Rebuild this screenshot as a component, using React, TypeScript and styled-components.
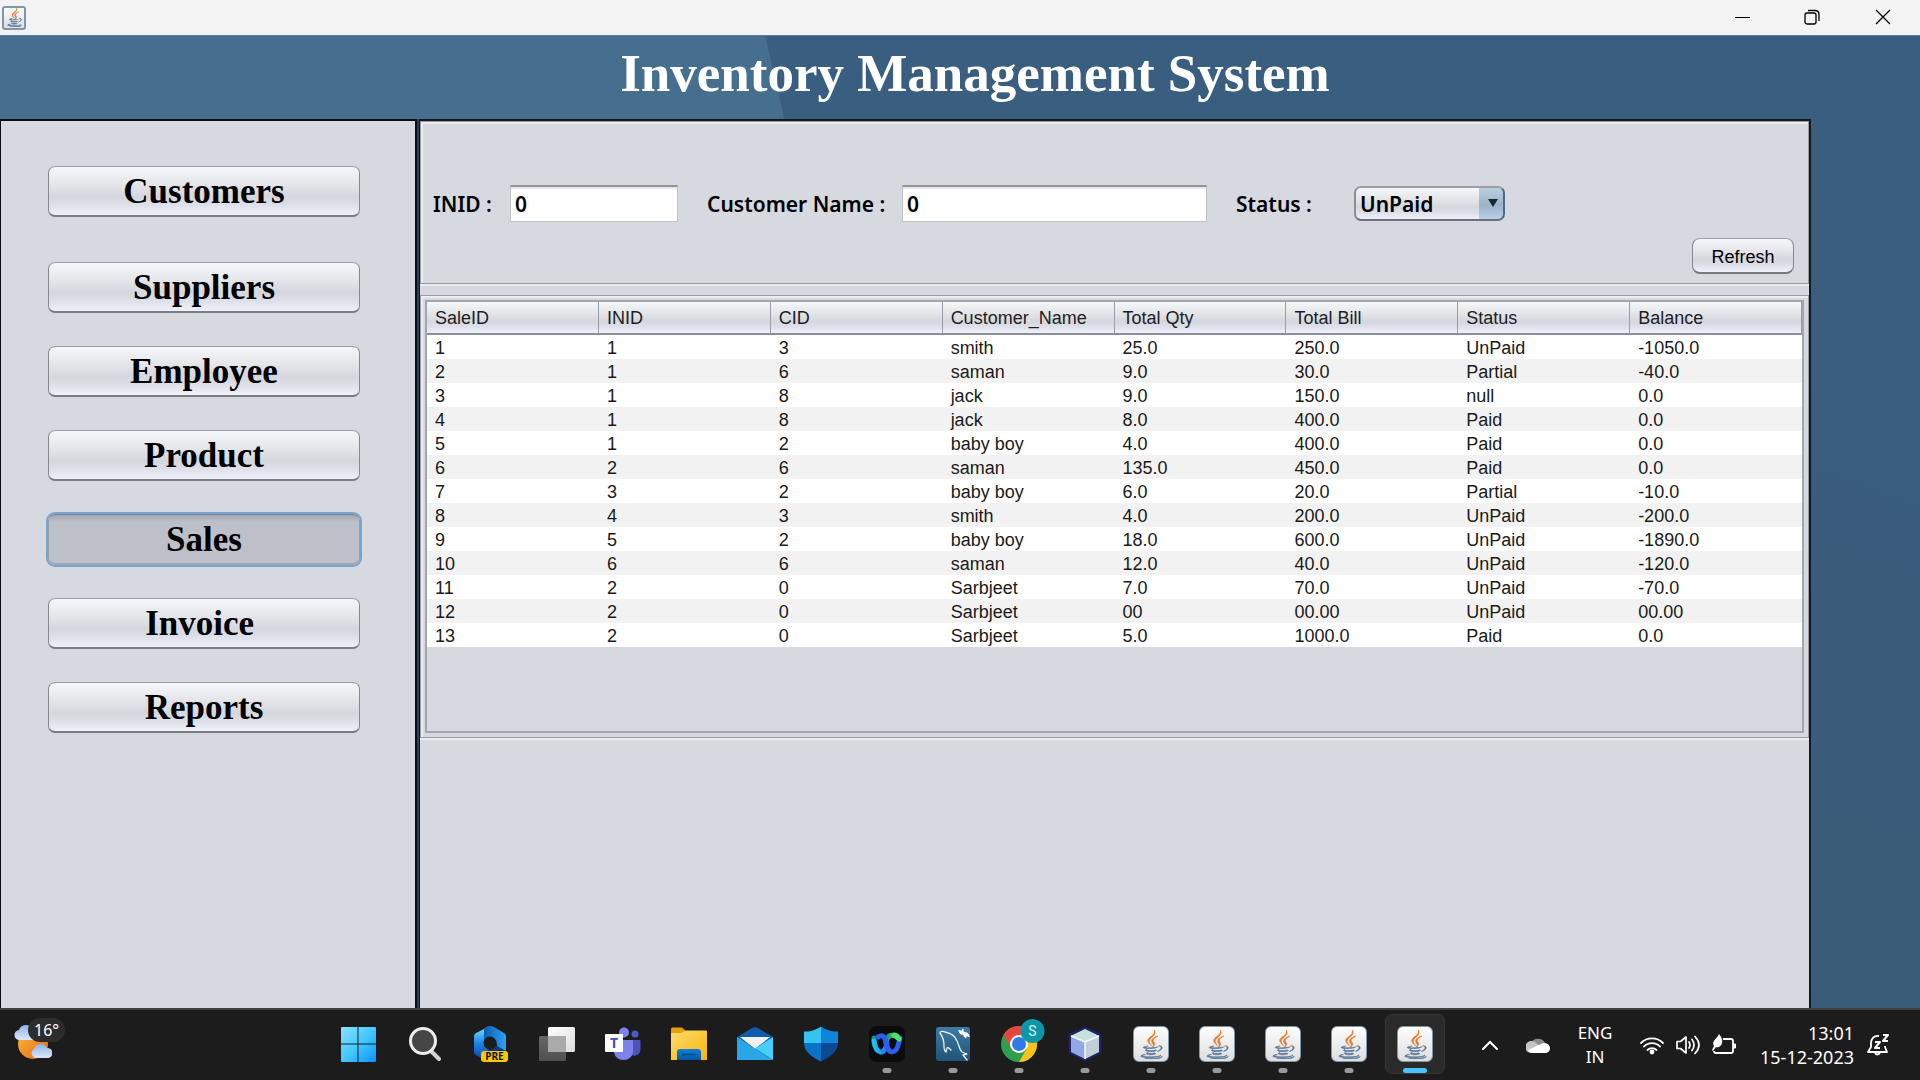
import React, { useState } from "react";
import styled, { createGlobalStyle, css } from "styled-components";
import { FaJava } from "react-icons/fa";

const sans = '"Liberation Sans", Arial, sans-serif';
const serif = '"Liberation Serif", "Times New Roman", serif';
const humanist = '"Noto Sans", "Open Sans", sans-serif';

const panel = "#d6d9e0";
const metal = "linear-gradient(#f6f7f9 0%, #e4e6ea 35%, #d5d7de 62%, #dcdfe8 78%, #eff1fa 100%)";

const GlobalStyle = createGlobalStyle`
  *, *::before, *::after { box-sizing: border-box; }
  body { margin: 0; background: #1c1c1c; }
  button, input, select { margin: 0; font: inherit; color: inherit; }
`;

const Screen = styled.div`
  min-height: 100vh;
  display: flex;
  flex-direction: column;
  font-family: ${sans};
  color: #000;
`;

/* ---------- window frame ---------- */

const TitleBar = styled.div`
  height: 35px;
  padding: 0 2px;
  display: flex;
  align-items: center;
  justify-content: space-between;
  background: #f3f3f3;
`;

const WindowControls = styled.div`
  align-self: flex-start;
  display: flex;
`;

const WindowButton = styled.button`
  width: 70px;
  height: 33px;
  padding: 0;
  border: 0;
  display: grid;
  place-items: center;
  background: transparent;
`;

const Banner = styled.header`
  height: 84px;
  padding: 7px 0 0 30px;
  border-top: 1px solid #5b7d98;
  text-align: center;
  background: linear-gradient(77deg, #466e8f calc(50% - 181px), #3a5e80 calc(50% - 180px));
`;

const Heading = styled.h1`
  margin: 0;
  font: bold 53px/60px ${serif};
  color: #fff;
`;

const Workspace = styled.div`
  flex: 1;
  padding-right: 109px;
  display: flex;
  background: linear-gradient(200deg, #3a5e80 0%, #3a5d7a 50%, #385b76 75%);
`;

const Divider = styled.div`
  width: 2px;
  background: #23415a;
`;

const Sidebar = styled.nav`
  width: 417px;
  padding: 45px 55px 0 47px;
  border: solid #0c0f12;
  border-width: 2px 2px 0 1px;
  display: flex;
  flex-direction: column;
  gap: 33px;
  background: ${panel};
`;

const NavButton = styled.button<{ $active?: boolean; $spaced?: boolean }>`
  height: 51px;
  padding: 2px 0 0;
  margin-bottom: ${(p) => (p.$spaced ? "12px" : "0")};
  border: 1px solid;
  border-width: 1px 1px 2px;
  border-color: #9a9da2 #85888e #7a7d83 #85888e;
  border-radius: 7px;
  font: bold 35px/46px ${serif};
  white-space: pre;
  background: ${metal};
  ${(p) =>
    p.$active &&
    css`
      border-color: #7d8189 #9a9ea6 #a4a8ae #9a9ea6;
      background: linear-gradient(#a3a6ae, #bdc0c8 14%, #bdc0c8);
      box-shadow: 0 0 0 2px #74a5d4;
    `}
`;

const Main = styled.main`
  flex: 1;
  min-width: 0;
  border: solid #15181c;
  border-width: 2px 2px 0 1px;
  display: flex;
  flex-direction: column;
  gap: 11px;
  background: ${panel};
`;

const Etched = styled.section`
  border: 1px solid #999ba0;
  box-shadow: inset 2px 2px 0 #ebecef, 0 2px 0 #ebecef;
`;

const FilterPanel = styled(Etched)`
  padding: 63px 14px 9px 12px;
  display: flex;
  flex-direction: column;
  gap: 16px;
`;

const TablePanel = styled(Etched)`
  padding: 4px;
`;

/* ---------- filter form ---------- */

const FieldRow = styled.div`
  display: flex;
  align-items: center;
  gap: 29px;
  font: 600 21px/26px ${humanist};
`;

const Field = styled.div`
  display: flex;
  align-items: center;
`;

const Label = styled.label<{ $width: number }>`
  width: ${(p) => p.$width}px;
  white-space: nowrap;
`;

const TextInput = styled.input<{ $width: number }>`
  width: ${(p) => p.$width}px;
  height: 37px;
  padding: 0 4px;
  border: 1px solid #bfc1c6;
  border-top: 2px solid #919398;
  border-radius: 0;
  outline: 0;
  background: linear-gradient(#dcdcde, #fff 3px);
`;

const SelectWrap = styled.div`
  position: relative;
  width: 151px;
  height: 35px;
`;

const Select = styled.select`
  width: 100%;
  height: 100%;
  padding: 0 26px 0 4px;
  border: 2px solid;
  border-color: #9b9da3 #4f6a86 #6d7078 #8b8e93;
  border-radius: 7px;
  appearance: none;
  outline: 0;
  line-height: 30px;
  background: linear-gradient(#bccfdf, #9ab3ca 55%, #b9d2e8) right / 24px 100% no-repeat, ${metal};
`;

const SelectArrow = styled.svg`
  position: absolute;
  right: 7px;
  top: 13px;
  pointer-events: none;
`;

const RefreshButton = styled.button`
  align-self: flex-end;
  width: 102px;
  height: 36px;
  padding: 2px 0 0;
  border: 1px solid;
  border-width: 1px 1px 2px;
  border-color: #9c9fa3 #85888e #75787e #85888e;
  border-radius: 8px;
  font: 18px/30px ${sans};
  background: ${metal};
`;

/* ---------- sales table ---------- */

const TableScroll = styled.div`
  min-height: 433px;
  border: 2px solid #a2a5af;
`;

const Table = styled.table`
  width: 100%;
  table-layout: fixed;
  border-collapse: separate;
  border-spacing: 0;
  font-size: 18px;
  text-align: left;
`;

const HeadCell = styled.th`
  height: 33px;
  padding: 0 8px;
  border-right: 1px solid #9a9da7;
  border-bottom: 2px solid #8b8e98;
  font-weight: normal;
  line-height: 24px;
  color: #1d1d1f;
  background: ${metal};
`;

const Row = styled.tr`
  background: #fff;
  &:nth-child(even) { background: #f2f2f2; }
`;

const Cell = styled.td`
  height: 24px;
  padding: 2px 8px 0;
  line-height: 22px;
  color: #1a1a1a;
`;

/* ---------- taskbar ---------- */

const Taskbar = styled.footer`
  height: 72px;
  border-top: 2px solid #404040;
  display: flex;
  color: #fff;
  background: #1c1c1c;
  font: 17px/24px ${humanist};
`;

const Weather = styled.div`
  position: relative;
  width: 326px;
  padding: 15px 0 0 14px;
`;

const Temperature = styled.span`
  position: absolute;
  left: 28px;
  top: 8px;
  padding: 0 6px;
  border-radius: 12px;
  font-size: 16px;
  background: #2d2d2d;
`;

const AppStrip = styled.div`
  display: flex;
`;

const AppButton = styled.button<{ $state?: "open" | "active" }>`
  position: relative;
  width: 60px;
  height: 60px;
  margin: 4px 3px 0;
  padding: 0;
  border: 1px solid transparent;
  border-radius: 7px;
  display: grid;
  place-items: center;
  background: transparent;
  ${(p) => p.$state === "active" && css`border-color: #363636; background: #2a2a2a;`}
  ${(p) =>
    p.$state &&
    css`
      &::after {
        content: "";
        position: absolute;
        left: 50%;
        bottom: 0;
        width: ${p.$state === "active" ? 24 : 9}px;
        height: 5px;
        border-radius: 3px;
        transform: translateX(-50%);
        background: ${p.$state === "active" ? "#4cc2ff" : "#9a9a9a"};
      }
    `}
`;

const Tray = styled.div`
  margin-left: auto;
  padding-right: 24px;
  display: flex;
  align-items: center;
`;

const TrayButton = styled.button`
  width: 36px;
  height: 48px;
  padding: 0;
  border: 0;
  display: grid;
  place-items: center;
  background: transparent;
`;

const TrayWide = styled(TrayButton)`
  width: 48px;
`;

const Language = styled.div`
  width: 66px;
  margin-right: 6px;
  text-align: center;
`;

const Clock = styled.time`
  margin: 0 6px 0 18px;
  font-size: 18px;
  text-align: right;
`;

/* ---------- icons ---------- */

const JavaTile = styled.span<{ $size: number }>`
  width: ${(p) => p.$size}px;
  height: ${(p) => p.$size}px;
  border: ${(p) => (p.$size > 30 ? 1 : 2)}px solid #7f97ab;
  border-radius: ${(p) => (p.$size > 30 ? 6 : 3)}px;
  display: grid;
  place-items: center;
  background: linear-gradient(#fdfdfd, #dedede);
  path {
    fill: url(#java-ink);
    stroke: url(#java-ink);
    stroke-width: 12px;
  }
`;

const JavaIcon = ({ size = 36 }: { size?: number }) => (
  <JavaTile $size={size}>
    <FaJava size={size > 30 ? 29 : 19} />
  </JavaTile>
);

const HiddenDefs = styled.svg`
  position: absolute;
`;

const Defs = () => (
  <HiddenDefs width="0" height="0" aria-hidden="true">
    <defs>
      <linearGradient id="java-ink" x1="0" y1="0" x2="0" y2="1">
        <stop offset="0.54" stopColor="#e8792b" />
        <stop offset="0.54" stopColor="#55789a" />
      </linearGradient>
    </defs>
  </HiddenDefs>
);

const WeatherIcon = () => (
  <svg width="38" height="36" viewBox="0 0 38 36">
    <defs>
      <linearGradient id="sun" x1="0" y1="0" x2="1" y2="1">
        <stop offset="0.1" stopColor="#f0b43a" /><stop offset="0.8" stopColor="#f0761c" />
      </linearGradient>
      <linearGradient id="cloud" x1="0" y1="0" x2="0" y2="1">
        <stop stopColor="#8fb2e8" /><stop offset="1" stopColor="#dbe7fa" />
      </linearGradient>
    </defs>
    <circle cx="19" cy="19" r="15" fill="url(#sun)" />
    <path d="M6 15a5 5 0 0 1-1-10 7 7 0 0 1 13-1 6 6 0 0 1 4 11z" fill="url(#cloud)" />
    <path d="M21 33a5 5 0 0 1-1-9 7 7 0 0 1 13-1 5 5 0 0 1 1 10z" fill="url(#cloud)" />
  </svg>
);

const WindowsIcon = () => (
  <svg width="36" height="36" viewBox="0 0 36 36">
    <defs>
      <linearGradient id="win" gradientUnits="userSpaceOnUse" x1="0" y1="0" x2="36" y2="36">
        <stop stopColor="#8be3ff" /><stop offset="0.5" stopColor="#45c8ff" /><stop offset="1" stopColor="#0a93ff" />
      </linearGradient>
    </defs>
    <path d="M1 1h15.500v16.500H0V2a1 1 0 0 1 1-1zM17.500 1H34a1 1 0 0 1 1 1v15.500H17.500zM0 18.500h16.500V36H1a1 1 0 0 1-1-1zM17.500 18.500H35V35a1 1 0 0 1-1 1H17.500z" fill="url(#win)" />
  </svg>
);

const SearchIcon = () => (
  <svg width="34" height="36" viewBox="0 0 34 36">
    <path d="M23 25l8 8" stroke="#d2d3d6" strokeWidth="4" strokeLinecap="round" />
    <circle cx="15" cy="15" r="12.500" fill="#464646" stroke="#eceded" strokeWidth="3" />
  </svg>
);

const CopilotIcon = () => (
  <svg width="36" height="38" viewBox="0 0 36 38">
    <defs>
      <linearGradient id="m365a" x1="0" y1="0" x2="0" y2="1">
        <stop stopColor="#74e2fb" /><stop offset="0.5" stopColor="#1c84e6" /><stop offset="1" stopColor="#0c3fae" />
      </linearGradient>
      <linearGradient id="m365b"><stop stopColor="#0b5cae" /><stop offset="1" stopColor="#2fa1f8" /></linearGradient>
    </defs>
    <path d="M15 2L3 8Q1 9 1 11v16q0 2 2 3l8 5 6-9-6-5z" fill="url(#m365a)" />
    <path d="M33 19v8q0 2-2 3l-10 6-6-11 8-4z" fill="#0a3b84" />
    <path d="M11 18V5q0-2 2-3 4-2 8 0l10 6q2 1 2 3v15l-9-5c0-8-8-11-13-3z" fill="url(#m365b)" />
    <circle cx="17" cy="18" r="6.500" fill="#1c1c1c" />
    <rect x="8" y="26" width="27" height="11" rx="3" fill="#fcc900" />
    <text x="21.500" y="35" textAnchor="middle" fontFamily={humanist} fontWeight="700" fontSize="10" fill="#111">PRE</text>
  </svg>
);

const TaskViewIcon = () => (
  <svg width="36" height="36" viewBox="0 0 36 36">
    <defs>
      <linearGradient id="tv1" x1="0" y1="0" x2="1" y2="1"><stop stopColor="#fff" /><stop offset="1" stopColor="#dcdcdc" /></linearGradient>
      <linearGradient id="tv2" x1="0" y1="0" x2="0" y2="1"><stop stopColor="#666" /><stop offset="1" stopColor="#505050" /></linearGradient>
    </defs>
    <rect x="9" y="1" width="27" height="25" rx="1.500" fill="url(#tv1)" />
    <rect x="0" y="10" width="27" height="25" rx="1.500" fill="url(#tv2)" />
    <path d="M9 10h18v16H9z" fill="#aaa" />
  </svg>
);

const TeamsIcon = () => (
  <svg width="36" height="36" viewBox="0 0 36 36">
    <circle cx="30" cy="8" r="3.500" fill="#5059c9" />
    <path d="M24 14h10.500q1 0 1 1v8c0 8-9 8-11.500 4z" fill="#4b53bc" />
    <circle cx="19" cy="6.500" r="5" fill="#7b83eb" />
    <path d="M9 14h18q1 0 1 1v10c0 12-19 12-19 0z" fill="#7b83eb" />
    <rect y="8" width="18" height="18" rx="1" fill="#fff" />
    <text x="9" y="22" textAnchor="middle" fontFamily={humanist} fontWeight="700" fontSize="14" fill="#464eb8">T</text>
  </svg>
);

const FolderIcon = () => (
  <svg width="36" height="36" viewBox="0 0 36 36">
    <defs>
      <linearGradient id="fold" x1="0" y1="0" x2="1" y2="1"><stop stopColor="#ffdc6e" /><stop offset="1" stopColor="#f7b50c" /></linearGradient>
      <linearGradient id="foldb" x1="0" y1="0" x2="0" y2="1"><stop stopColor="#1180d4" /><stop offset="1" stopColor="#0659a6" /></linearGradient>
    </defs>
    <path d="M0 3q0-1.500 1.500-1.500H11l4 3.500v4H0z" fill="#e2a108" />
    <path d="M0 7h10l5-2.500h20q1 0 1 1V34H0z" fill="url(#fold)" />
    <path d="M6 34V26q0-3 3-3h18q3 0 3 3v8z" fill="url(#foldb)" />
    <path d="M11 28.500h14" stroke="#074884" strokeWidth="1.500" />
  </svg>
);

const MailIcon = () => (
  <svg width="36" height="36" viewBox="0 0 36 36">
    <path d="M0 11L16 1.500q2-1 4 0L36 11v8H0z" fill="#0f5cac" />
    <path d="M3 11h30L18 23z" fill="#f1f1f1" />
    <path d="M36 11v23L18 22.500z" fill="#46cffa" />
    <path d="M0 11l36 23H0z" fill="#29a5e8" />
  </svg>
);

const ShieldIcon = () => (
  <svg width="34" height="36" viewBox="0 0 34 36">
    <path d="M17 0.500C13 3.500 6 6 0 5.500V17h17z" fill="#36c3f2" />
    <path d="M17 0.500C21 3.500 28 6 34 5.500V17H17z" fill="#0f86dc" />
    <path d="M0 17h17v18.500C7 31 0 25 0 17z" fill="#0a72c8" />
    <path d="M34 17H17v18.500C27 31 34 25 34 17z" fill="#0d4a94" />
  </svg>
);

const WebexIcon = () => (
  <svg width="36" height="36" viewBox="0 0 36 36">
    <defs>
      <linearGradient id="wxa"><stop stopColor="#17c6ee" /><stop offset="1" stopColor="#2672f6" /></linearGradient>
      <linearGradient id="wxb"><stop stopColor="#15907a" /><stop offset="1" stopColor="#4fe06c" /></linearGradient>
    </defs>
    <rect width="36" height="36" rx="7" fill="#0b0b0b" />
    <path d="M5 12c0 3 0 5 1 7" fill="none" stroke="#15907a" strokeWidth="5" strokeLinecap="round" />
    <path d="M17 17c1-8 6-10 12-5" fill="none" stroke="url(#wxb)" strokeWidth="5" strokeLinecap="round" />
    <path d="M5 15c2 14 11 15 13 2" fill="none" stroke="url(#wxa)" strokeWidth="5" strokeLinecap="round" />
    <path d="M9 11c7-4 7 3 9 9 2 7 9 10 12-4l1-4" fill="none" stroke="#2b5df2" strokeWidth="5" strokeLinecap="round" />
    <path d="M25 9q3 0 5 4" fill="none" stroke="#4fe06c" strokeWidth="5" strokeLinecap="round" />
  </svg>
);

const WorkbenchIcon = () => (
  <svg width="36" height="36" viewBox="0 0 36 36">
    <defs>
      <linearGradient id="wb" x1="0" y1="0" x2="0" y2="1"><stop stopColor="#3f7ba5" /><stop offset="1" stopColor="#1f5377" /></linearGradient>
    </defs>
    <rect x="1" y="1" width="34" height="34" rx="3" fill="url(#wb)" />
    <path d="M16 24c-2-2-3-3-4-2l-1 4c-2-1-2-4-2-6C9 14 8 11 5 7c0-2 3-2 5-1 6 1 10 4 12 9 2 4 2 8 5 11l5 2-4 1 4 5" fill="none" stroke="#e9f2f8" strokeWidth="1.300" strokeLinejoin="round" strokeLinecap="round" />
    <path d="M27 6l4 3" stroke="#fff" strokeWidth="3" />
    <path d="M28 3l-1 2-2 0-1-1c0 3 2 5 4 4zM30 7c2-1 4 1 4 4l-1-1-2 0 0 2c-2-1-3-3-1-5z" fill="#fff" stroke="#fff" />
  </svg>
);

const ChromeIcon = () => (
  <svg width="52" height="52" viewBox="-4 0 52 52">
    <circle cx="22" cy="26" r="18" fill="#2f9e4f" />
    <path d="M22 26L6.400 17A18 18 0 0 1 37.600 17z" fill="#e8453c" />
    <path d="M22 17h15.600A18 18 0 0 1 22 44l8-14z" fill="#fcc11a" />
    <path d="M6.400 17L14.500 30.500 22 26v-9z" fill="#e8453c" />
    <circle cx="22" cy="26" r="9" fill="#fff" />
    <circle cx="22" cy="26" r="7" fill="#3079ea" />
    <circle cx="35.500" cy="13" r="12" fill="#0b97a5" />
    <text x="35.500" y="18" textAnchor="middle" fontFamily="Roboto, sans-serif" fontSize="14" fill="#d9f2f4">S</text>
  </svg>
);

const CubeIcon = () => (
  <svg width="36" height="36" viewBox="0 0 36 36">
    <path d="M18 2l15 7v17l-15 8-15-8V9z" fill="#dfe8f5" stroke="#20246c" strokeWidth="2.500" strokeLinejoin="round" />
    <path d="M18 3l14 7-14 6-14-6z" fill="#c6e0dc" />
    <path d="M4 10l14 6v17L4 26z" fill="#92a8e6" />
    <path d="M32 10l-14 6v17l14-7z" fill="#c3cfd8" />
    <path d="M4 10l14 6 14-6M18 16v17" fill="none" stroke="#f5f9ff" strokeWidth="1.500" />
  </svg>
);

const CloudIcon = () => (
  <svg width="24" height="16" viewBox="0 0 24 16">
    <path d="M5 6a8 8 0 0 1 14 0l-6 4z" fill="#8c8c8c" />
    <path d="M6 15.500A5.500 5.500 0 0 1 1 6c3-3 7-2 9 0l6 4z" fill="#c4c4c4" />
    <path d="M2 13l13-6c5-3 9 1 9 4 0 3-2 5-5 5H6c-2 0-3-1-4-3z" fill="#fff" />
  </svg>
);

const WifiIcon = () => (
  <svg width="26" height="24" viewBox="0 0 26 24" fill="none" stroke="#fff" strokeWidth="1.800" strokeLinecap="round">
    <path d="M2 10a15.500 15.500 0 0 1 22 0M5 13.500a11 11 0 0 1 16 0M8.500 17a6.500 6.500 0 0 1 9 0" />
    <circle cx="13" cy="19" r="1.500" fill="#fff" />
  </svg>
);

const SpeakerIcon = () => (
  <svg width="26" height="22" viewBox="0 0 26 22" fill="none" stroke="#fff" strokeWidth="1.700" strokeLinecap="round" strokeLinejoin="round">
    <path d="M2 7.500h3.500L11 3v16l-5.500-4.500H2z" />
    <path d="M14 8q2 3 0 6M17 5.500q4 5.500 0 11M20 2.500q8 8.500 0 17" />
  </svg>
);

const BatteryIcon = () => (
  <svg width="26" height="22" viewBox="0 0 26 22">
    <path d="M12 5h8q2 0 2 2v10q0 2-2 2H5q-2 0-2-2" fill="none" stroke="#fff" strokeWidth="1.800" />
    <path d="M23 10h1.500v4H23z" fill="#fff" stroke="#fff" />
    <path d="M8 0c2 3 4 5 3 9-1 4-4 5-6 4l-3 4-1-1 2-4C0 7 6 5 8 0z" fill="#fff" />
  </svg>
);

const BellIcon = () => (
  <svg width="24" height="26" viewBox="0 0 24 26" fill="none" stroke="#fff" strokeWidth="1.800" strokeLinejoin="round">
    <path d="M13 4C8 3 5 7 5 11v4l-3 5h19l-2-5v-1M9 21q2 3 5 0" />
    <path d="M9 10h5l-5 6h5M17 3h5l-5 6h5" strokeWidth="2" />
  </svg>
);

/* ---------- data ---------- */

const sections = ["Customers", "Suppliers", "Employee", "Product", "Sales", "Invoice ", "Reports"];

const columns = ["SaleID", "INID", "CID", "Customer_Name", "Total Qty", "Total Bill", "Status", "Balance"];

const sales = [
  ["1", "1", "3", "smith", "25.0", "250.0", "UnPaid", "-1050.0"],
  ["2", "1", "6", "saman", "9.0", "30.0", "Partial", "-40.0"],
  ["3", "1", "8", "jack", "9.0", "150.0", "null", "0.0"],
  ["4", "1", "8", "jack", "8.0", "400.0", "Paid", "0.0"],
  ["5", "1", "2", "baby boy", "4.0", "400.0", "Paid", "0.0"],
  ["6", "2", "6", "saman", "135.0", "450.0", "Paid", "0.0"],
  ["7", "3", "2", "baby boy", "6.0", "20.0", "Partial", "-10.0"],
  ["8", "4", "3", "smith", "4.0", "200.0", "UnPaid", "-200.0"],
  ["9", "5", "2", "baby boy", "18.0", "600.0", "UnPaid", "-1890.0"],
  ["10", "6", "6", "saman", "12.0", "40.0", "UnPaid", "-120.0"],
  ["11", "2", "0", "Sarbjeet", "7.0", "70.0", "UnPaid", "-70.0"],
  ["12", "2", "0", "Sarbjeet", "00", "00.00", "UnPaid", "00.00"],
  ["13", "2", "0", "Sarbjeet", "5.0", "1000.0", "Paid", "0.0"],
];

type TaskApp = { name: string; icon: React.ReactNode; state?: "open" | "active" };

const apps: TaskApp[] = [
  { name: "Start", icon: <WindowsIcon /> },
  { name: "Search", icon: <SearchIcon /> },
  { name: "Copilot", icon: <CopilotIcon /> },
  { name: "Task View", icon: <TaskViewIcon /> },
  { name: "Teams", icon: <TeamsIcon /> },
  { name: "File Explorer", icon: <FolderIcon /> },
  { name: "Mail", icon: <MailIcon /> },
  { name: "Security", icon: <ShieldIcon /> },
  { name: "Webex", icon: <WebexIcon />, state: "open" },
  { name: "MySQL Workbench", icon: <WorkbenchIcon />, state: "open" },
  { name: "Chrome", icon: <ChromeIcon />, state: "open" },
  { name: "NetBeans", icon: <CubeIcon />, state: "open" },
  { name: "Java 1", icon: <JavaIcon />, state: "open" },
  { name: "Java 2", icon: <JavaIcon />, state: "open" },
  { name: "Java 3", icon: <JavaIcon />, state: "open" },
  { name: "Java 4", icon: <JavaIcon />, state: "open" },
  { name: "Java 5", icon: <JavaIcon />, state: "active" },
];

export default function App() {
  const [section, setSection] = useState("Sales");
  const [inid, setInid] = useState("0");
  const [customer, setCustomer] = useState("0");
  const [status, setStatus] = useState("UnPaid");

  return (
    <Screen>
      <GlobalStyle />
      <Defs />
      <TitleBar>
        <JavaIcon size={24} />
        <WindowControls>
          <WindowButton aria-label="Minimize">
            <svg width="16" height="16"><path d="M0 8.500h15" stroke="#000" /></svg>
          </WindowButton>
          <WindowButton aria-label="Restore">
            <svg width="18" height="16" fill="none" stroke="#000" strokeWidth="1.300">
              <rect x="1" y="4" width="11" height="11" rx="2" />
              <path d="M4 1.500h7q4 0 4 4V12" />
            </svg>
          </WindowButton>
          <WindowButton aria-label="Close">
            <svg width="16" height="16"><path d="M1 1l14 14M15 1L1 15" stroke="#000" strokeWidth="1.300" /></svg>
          </WindowButton>
        </WindowControls>
      </TitleBar>

      <Banner>
        <Heading>Inventory Management System</Heading>
      </Banner>

      <Workspace>
        <Sidebar>
          {sections.map((name, i) => (
            <NavButton key={name} $active={name === section} $spaced={i === 0} onClick={() => setSection(name)}>
              {name}
            </NavButton>
          ))}
        </Sidebar>
        <Divider />
        <Main>
          <FilterPanel>
            <FieldRow>
              <Field>
                <Label htmlFor="inid" $width={77}>INID :</Label>
                <TextInput id="inid" $width={168} value={inid} onChange={(e) => setInid(e.target.value)} />
              </Field>
              <Field>
                <Label htmlFor="customer" $width={195}>Customer Name :</Label>
                <TextInput id="customer" $width={305} value={customer} onChange={(e) => setCustomer(e.target.value)} />
              </Field>
              <Field>
                <Label htmlFor="status" $width={118}>Status :</Label>
                <SelectWrap>
                  <Select id="status" value={status} onChange={(e) => setStatus(e.target.value)}>
                    <option>UnPaid</option>
                    <option>Partial</option>
                    <option>Paid</option>
                  </Select>
                  <SelectArrow width="10" height="8"><path d="M0 0h10L5 8z" fill="#1c2630" /></SelectArrow>
                </SelectWrap>
              </Field>
            </FieldRow>
            <RefreshButton>Refresh</RefreshButton>
          </FilterPanel>

          <TablePanel>
            <TableScroll>
              <Table>
                <thead>
                  <tr>
                    {columns.map((c) => <HeadCell key={c} scope="col">{c}</HeadCell>)}
                  </tr>
                </thead>
                <tbody>
                  {sales.map((sale) => (
                    <Row key={sale[0]}>
                      {sale.map((value, i) => <Cell key={columns[i]}>{value}</Cell>)}
                    </Row>
                  ))}
                </tbody>
              </Table>
            </TableScroll>
          </TablePanel>
        </Main>
      </Workspace>

      <Taskbar>
        <Weather>
          <WeatherIcon />
          <Temperature>16°</Temperature>
        </Weather>
        <AppStrip>
          {apps.map((app) => (
            <AppButton key={app.name} aria-label={app.name} $state={app.state}>{app.icon}</AppButton>
          ))}
        </AppStrip>
        <Tray>
          <TrayWide aria-label="Show hidden icons">
            <svg width="18" height="12" fill="none" stroke="#fff" strokeWidth="2" strokeLinecap="round"><path d="M2 10l7-7 7 7" /></svg>
          </TrayWide>
          <TrayWide aria-label="OneDrive"><CloudIcon /></TrayWide>
          <Language>ENG<br />IN</Language>
          <TrayButton aria-label="Network"><WifiIcon /></TrayButton>
          <TrayButton aria-label="Volume"><SpeakerIcon /></TrayButton>
          <TrayButton aria-label="Battery"><BatteryIcon /></TrayButton>
          <Clock>13:01<br />15-12-2023</Clock>
          <TrayButton aria-label="Notifications"><BellIcon /></TrayButton>
        </Tray>
      </Taskbar>
    </Screen>
  );
}
